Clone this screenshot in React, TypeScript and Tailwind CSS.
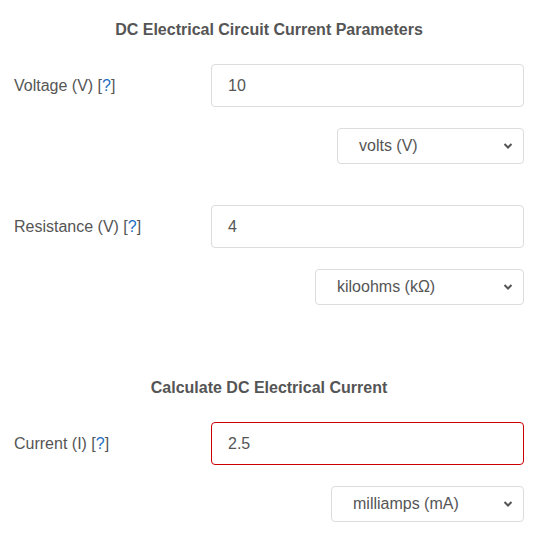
import React from "react";

const font = { fontFamily: '"Liberation Sans", Arial, sans-serif' };

function Chevron() {
  return (
    <svg width="10" height="7" viewBox="0 0 10 7" className="absolute right-[10px] top-1/2 -translate-y-1/2">
      <path d="M1.5 1.5 L5 5 L8.5 1.5" fill="none" stroke="#555" strokeWidth="2" />
    </svg>
  );
}

function Label({ text }: { text: string }) {
  return (
    <div className="w-[197px] shrink-0 text-[16px] text-[#555]">
      {text} [<span className="text-[#1f6fc5]">?</span>]
    </div>
  );
}

function Row({ label, value, error }: { label: string; value: string; error?: boolean }) {
  return (
    <div className="flex items-center h-[43px]">
      <Label text={label} />
      <div
        className={
          "flex-1 h-[43px] rounded-[4px] border bg-white flex items-center pl-[16px] text-[16px] text-[#555] " +
          (error ? "border-[#cc0000]" : "border-[#dcdcdc]")
        }
      >
        {value}
      </div>
    </div>
  );
}

function Select({ text, width }: { text: string; width: string }) {
  return (
    <div className="flex justify-end mt-[21px]">
      <div
        className={
          "relative h-[36px] rounded-[4px] border border-[#dcdcdc] bg-white flex items-center pl-[21px] text-[16px] text-[#555] " +
          width
        }
      >
        {text}
        <Chevron />
      </div>
    </div>
  );
}

export default function App() {
  return (
    <div className="w-[538px] h-[541px] bg-white px-[14px] pt-[20px]" style={font}>
      <div className="h-[20px] leading-[20px] text-center font-bold text-[16px] text-[#555]">
        DC Electrical Circuit Current Parameters
      </div>
      <div className="mt-[24px]">
        <Row label="Voltage (V)" value="10" />
      </div>
      <Select text="volts (V)" width="w-[187px]" />
      <div className="mt-[41px]">
        <Row label="Resistance (V)" value="4" />
      </div>
      <Select text="kiloohms (kΩ)" width="w-[209px]" />
      <div className="mt-[73px] h-[20px] leading-[20px] text-center font-bold text-[16px] text-[#555]">
        Calculate DC Electrical Current
      </div>
      <div className="mt-[24px]">
        <Row label="Current (I)" value="2.5" error />
      </div>
      <Select text="milliamps (mA)" width="w-[193px]" />
    </div>
  );
}
